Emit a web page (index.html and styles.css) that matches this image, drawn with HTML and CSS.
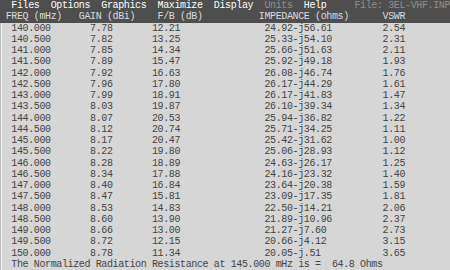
FILE: index.html
```html
<!DOCTYPE html>
<html>
<head>
<meta charset="utf-8">
<link rel="stylesheet" href="styles.css">
</head>
<body>
<div class="screen">
  <div class="top">
    <div class="line menu">
      <span class="c2">Files</span><span class="c9">Options</span><span class="c18">Graphics</span><span class="c28">Maximize</span><span class="c38">Display</span><span class="c47 dim">Units</span><span class="c54">Help</span><span class="c63 dim">File: 3EL-VHF.INP</span>
    </div>
    <div class="line head">
      <span class="c1">FREQ (mHz)</span><span class="c14">GAIN (dBi)</span><span class="c28">F/B (dB)</span><span class="c46">IMPEDANCE (ohms)</span><span class="c68">VSWR</span>
    </div>
  </div>
  <div class="body">
    <div class="line"><span class="c2">140.000</span><span class="c16">7.78</span><span class="c27">12.21</span><span class="c47">24.92-j56.61</span><span class="c68">2.54</span></div>
    <div class="line"><span class="c2">140.500</span><span class="c16">7.82</span><span class="c27">13.25</span><span class="c47">25.33-j54.10</span><span class="c68">2.31</span></div>
    <div class="line"><span class="c2">141.000</span><span class="c16">7.85</span><span class="c27">14.34</span><span class="c47">25.66-j51.63</span><span class="c68">2.11</span></div>
    <div class="line"><span class="c2">141.500</span><span class="c16">7.89</span><span class="c27">15.47</span><span class="c47">25.92-j49.18</span><span class="c68">1.93</span></div>
    <div class="line"><span class="c2">142.000</span><span class="c16">7.92</span><span class="c27">16.63</span><span class="c47">26.08-j46.74</span><span class="c68">1.76</span></div>
    <div class="line"><span class="c2">142.500</span><span class="c16">7.96</span><span class="c27">17.80</span><span class="c47">26.17-j44.29</span><span class="c68">1.61</span></div>
    <div class="line"><span class="c2">143.000</span><span class="c16">7.99</span><span class="c27">18.91</span><span class="c47">26.17-j41.83</span><span class="c68">1.47</span></div>
    <div class="line"><span class="c2">143.500</span><span class="c16">8.03</span><span class="c27">19.87</span><span class="c47">26.10-j39.34</span><span class="c68">1.34</span></div>
    <div class="line"><span class="c2">144.000</span><span class="c16">8.07</span><span class="c27">20.53</span><span class="c47">25.94-j36.82</span><span class="c68">1.22</span></div>
    <div class="line"><span class="c2">144.500</span><span class="c16">8.12</span><span class="c27">20.74</span><span class="c47">25.71-j34.25</span><span class="c68">1.11</span></div>
    <div class="line"><span class="c2">145.000</span><span class="c16">8.17</span><span class="c27">20.47</span><span class="c47">25.42-j31.62</span><span class="c68">1.00</span></div>
    <div class="line"><span class="c2">145.500</span><span class="c16">8.22</span><span class="c27">19.80</span><span class="c47">25.06-j28.93</span><span class="c68">1.12</span></div>
    <div class="line"><span class="c2">146.000</span><span class="c16">8.28</span><span class="c27">18.89</span><span class="c47">24.63-j26.17</span><span class="c68">1.25</span></div>
    <div class="line"><span class="c2">146.500</span><span class="c16">8.34</span><span class="c27">17.88</span><span class="c47">24.16-j23.32</span><span class="c68">1.40</span></div>
    <div class="line"><span class="c2">147.000</span><span class="c16">8.40</span><span class="c27">16.84</span><span class="c47">23.64-j20.38</span><span class="c68">1.59</span></div>
    <div class="line"><span class="c2">147.500</span><span class="c16">8.47</span><span class="c27">15.81</span><span class="c47">23.09-j17.35</span><span class="c68">1.81</span></div>
    <div class="line"><span class="c2">148.000</span><span class="c16">8.53</span><span class="c27">14.83</span><span class="c47">22.50-j14.21</span><span class="c68">2.06</span></div>
    <div class="line"><span class="c2">148.500</span><span class="c16">8.60</span><span class="c27">13.90</span><span class="c47">21.89-j10.96</span><span class="c68">2.37</span></div>
    <div class="line"><span class="c2">149.000</span><span class="c16">8.66</span><span class="c27">13.00</span><span class="c47">21.27-j7.60</span><span class="c68">2.73</span></div>
    <div class="line"><span class="c2">149.500</span><span class="c16">8.72</span><span class="c27">12.15</span><span class="c47">20.66-j4.12</span><span class="c68">3.15</span></div>
    <div class="line"><span class="c2">150.000</span><span class="c16">8.78</span><span class="c27">11.34</span><span class="c47">20.05-j.51</span><span class="c68">3.65</span></div>
    <div class="line"><span class="c2">The Normalized Radiation Resistance at 145.000 mHz is =  64.8 Ohms</span></div>
  </div>
</div>
</body>
</html>
```
FILE: styles.css
```css
html, body {
  margin: 0;
  padding: 0;
  background: #d6d6d6;
}

.screen {
  width: 450px;
  height: 270px;
  overflow: hidden;
  font-family: "Liberation Mono", "DejaVu Sans Mono", monospace;
  font-size: 10px;
  letter-spacing: -0.375px;
  background: #d6d6d6;
  color: #444444;
}

.top {
  background: #4e4e4e;
}

.body {
  height: 247.5px;
  box-shadow: inset 1px 0 #bcbcbc, inset 2px 0 #f2f2f2;
}

.line {
  display: grid;
  grid-template-columns: repeat(80, 5.625px);
  height: 11.25px;
  line-height: 11.25px;
  white-space: pre;
}

.menu {
  color: #ffffff;
}

.menu .dim {
  color: #8e8e8e;
}

.head {
  color: #dcdcdc;
}

.c1 { grid-column-start: 2; }
.c2 { grid-column-start: 3; }
.c9 { grid-column-start: 10; }
.c14 { grid-column-start: 15; }
.c16 { grid-column-start: 17; }
.c18 { grid-column-start: 19; }
.c27 { grid-column-start: 28; }
.c28 { grid-column-start: 29; }
.c38 { grid-column-start: 39; }
.c46 { grid-column-start: 47; }
.c47 { grid-column-start: 48; }
.c54 { grid-column-start: 55; }
.c63 { grid-column-start: 64; }
.c68 { grid-column-start: 69; }
```
